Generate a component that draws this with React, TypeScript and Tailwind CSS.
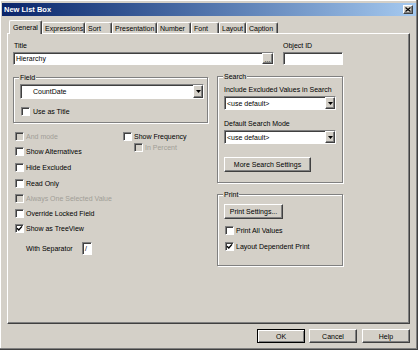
import React from "react";

const raised =
  "border border-t-white border-l-white border-r-[#404040] border-b-[#404040] shadow-[inset_-1px_-1px_0_#808080]";
const sunken =
  "border border-t-[#808080] border-l-[#808080] border-r-white border-b-white shadow-[inset_1px_1px_0_#404040]";
const etched = "border border-[#808080] shadow-[inset_1px_1px_0_#fff,1px_1px_0_#fff]";

function Check({ checked = false, disabled = false }: { checked?: boolean; disabled?: boolean }) {
  return (
    <span
      className={`flex h-[9px] w-[9px] shrink-0 items-center justify-center ${sunken} ${
        disabled ? "bg-[#d4d0c8]" : "bg-white"
      }`}
    >
      {checked && (
        <svg width="7" height="7" viewBox="0 0 7 7">
          <path d="M1 3.2 L2.8 5 L6 1.4" stroke="#000" strokeWidth="1.4" fill="none" />
        </svg>
      )}
    </span>
  );
}

function CheckRow({
  label,
  checked,
  disabled,
  h,
}: {
  label: string;
  checked?: boolean;
  disabled?: boolean;
  h: string;
}) {
  return (
    <div className={`flex items-center gap-[2px] ${h}`}>
      <Check checked={checked} disabled={disabled} />
      <span className={disabled ? "text-[#a19e97]" : ""}>{label}</span>
    </div>
  );
}

function Arrow() {
  return (
    <span className={`flex h-full w-[10px] shrink-0 items-center justify-center bg-[#d4d0c8] ${raised}`}>
      <svg width="5" height="3" viewBox="0 0 5 3">
        <path d="M0 0h5L2.5 3z" fill="#000" />
      </svg>
    </span>
  );
}

function Combo({ text, className, pad = "pl-[2px]" }: { text: string; className: string; pad?: string }) {
  return (
    <div className={`flex items-center bg-white ${sunken} ${className}`}>
      <span className={`flex-1 truncate ${pad}`}>{text}</span>
      <Arrow />
    </div>
  );
}

function Btn({ label, className }: { label: string; className: string }) {
  return (
    <div className={`flex items-center justify-center bg-[#d4d0c8] ${raised} ${className}`}>{label}</div>
  );
}

function Group({ label, className, children }: { label: string; className: string; children?: React.ReactNode }) {
  return (
    <div className={`relative ${etched} ${className}`}>
      <span className="absolute -top-[5px] left-[5px] bg-[#d4d0c8] px-[1px]">{label}</span>
      {children}
    </div>
  );
}

const tabs = [
  { label: "General", w: "w-[33px]" },
  { label: "Expressions", w: "w-[43px]" },
  { label: "Sort", w: "w-[27px]" },
  { label: "Presentation", w: "w-[45px]" },
  { label: "Number", w: "w-[34px]" },
  { label: "Font", w: "w-[28px]" },
  { label: "Layout", w: "w-[27px]" },
  { label: "Caption", w: "w-[32px]" },
];

export default function App() {
  return (
    <div className="h-[355px] w-[419px] bg-white font-['Liberation_Sans',Arial,sans-serif] text-[7px] leading-[9px] text-black">
      <div className="flex h-[350px] w-[418px] flex-col bg-[#d4d0c8] px-[2px] pt-[3px] shadow-[inset_-1px_-1px_0_#404040,inset_-2px_-2px_0_#808080,inset_1px_1px_0_#fff]">
        {/* title bar */}
        <div className="flex h-[13px] items-center justify-between bg-linear-to-r from-[#0a246a] to-[#a6caf0] pl-[2px] pr-[3px]">
          <span className="text-[7.5px] font-bold text-white">New List Box</span>
          <span className={`flex h-[9px] w-[10px] items-center justify-center bg-[#d4d0c8] ${raised}`}>
            <svg width="6" height="5" viewBox="0 0 6 5">
              <path d="M0.5 0.5 L5.5 4.5 M5.5 0.5 L0.5 4.5" stroke="#000" strokeWidth="1.2" />
            </svg>
          </span>
        </div>

        {/* tabs */}
        <div className="relative z-10 ml-[7px] mt-[4px] flex h-[13px] items-end">
          {tabs.map((t, i) => (
            <div
              key={t.label}
              className={`flex items-center rounded-t-[2px] border-t border-l border-r border-t-white border-l-white border-r-[#404040] bg-[#d4d0c8] pl-[2px] shadow-[inset_-1px_0_0_#808080] ${t.w} ${
                i === 0 ? "-mb-px h-[14px] pl-[3px]" : "h-[11px]"
              }`}
            >
              {t.label}
            </div>
          ))}
        </div>

        {/* panel */}
        <div className={`ml-[5px] h-[291px] w-[403px] pl-[5px] pt-[7px] ${raised}`}>
          <div className="flex gap-[9px]">
            <div className="flex w-[261px] flex-col">
              <span className="h-[9px] pl-[1px]">Title</span>
              <div className={`mt-[2px] flex h-[13px] items-center bg-white ${sunken}`}>
                <span className="flex-1 pl-[2px]">Hierarchy</span>
                <span className={`flex h-full w-[11px] items-end justify-center bg-[#d4d0c8] pb-[1px] leading-[5px] ${raised}`}>
                  ...
                </span>
              </div>
            </div>
            <div className="flex w-[60px] flex-col">
              <span className="h-[9px]">Object ID</span>
              <div className={`mt-[2px] h-[13px] bg-white ${sunken}`} />
            </div>
          </div>

          <div className="mt-[11px] flex gap-[9px]">
            {/* left column */}
            <div className="flex w-[195px] flex-col">
              <Group label="Field" className="mt-[1px] h-[46px] px-[6px] pt-[6px]">
                <Combo text="CountDate" className="h-[15px] w-[184px]" pad="pl-[12px]" />
                <div className="mt-[6px] flex h-[12px] items-center gap-[3px] pl-[1px]">
                  <Check />
                  <span>Use as Title</span>
                </div>
              </Group>

              <div className="mt-[6px] flex pl-[2px]">
                <div className="flex w-[108px] flex-col">
                  <CheckRow label="And mode" disabled h="h-[15px]" />
                  <CheckRow label="Show Alternatives" h="h-[15px]" />
                  <CheckRow label="Hide Excluded" h="h-[16px]" />
                  <CheckRow label="Read Only" h="h-[16px]" />
                  <CheckRow label="Always One Selected Value" disabled h="h-[15px]" />
                  <CheckRow label="Override Locked Field" h="h-[15px]" />
                  <CheckRow label="Show as TreeView" checked h="h-[15px]" />
                </div>
                <div className="mt-[2px] flex flex-col">
                  <CheckRow label="Show Frequency" h="h-[11px]" />
                  <div className="pl-[11px]">
                    <CheckRow label="In Percent" disabled h="h-[11px]" />
                  </div>
                </div>
              </div>

              <div className="mt-[6px] flex h-[13px] items-center pl-[13px]">
                <span className="w-[56px]">With Separator</span>
                <div className={`flex h-[13px] w-[10px] items-center bg-white pl-[2px] ${sunken}`}>/</div>
              </div>
            </div>

            {/* right column */}
            <div className="flex w-[126px] flex-col">
              <Group label="Search" className="flex h-[107px] flex-col px-[6px] pt-[8px]">
                <span className="h-[9px]">Include Excluded Values in Search</span>
                <Combo text="<use default>" className="mt-[2px] h-[14px] w-[112px]" />
                <span className="mt-[9px] h-[9px]">Default Search Mode</span>
                <Combo text="<use default>" className="mt-[2px] h-[14px] w-[112px]" />
                <Btn label="More Search Settings" className="mt-[13px] h-[15px] w-[87px]" />
              </Group>

              <Group label="Print" className="mt-[11px] flex h-[72px] flex-col px-[6px] pt-[9px]">
                <Btn label="Print Settings..." className="h-[15px] w-[59px]" />
                <div className="mt-[5px] pl-[1px]">
                  <CheckRow label="Print All Values" h="h-[12px]" />
                </div>
                <div className="mt-[4px] pl-[1px]">
                  <CheckRow label="Layout Dependent Print" checked h="h-[12px]" />
                </div>
              </Group>
            </div>
          </div>
        </div>

        {/* buttons */}
        <div className="ml-[5px] mt-[5px] flex w-[403px] justify-end gap-[4px]">
          <div className="flex h-[14px] w-[48px] items-center justify-center border border-black bg-[#d4d0c8] shadow-[inset_1px_1px_0_#fff,inset_-1px_-1px_0_#808080]">
            OK
          </div>
          <Btn label="Cancel" className="mr-[1px] h-[14px] w-[48px]" />
          <Btn label="Help" className="h-[14px] w-[48px]" />
        </div>
      </div>
    </div>
  );
}
